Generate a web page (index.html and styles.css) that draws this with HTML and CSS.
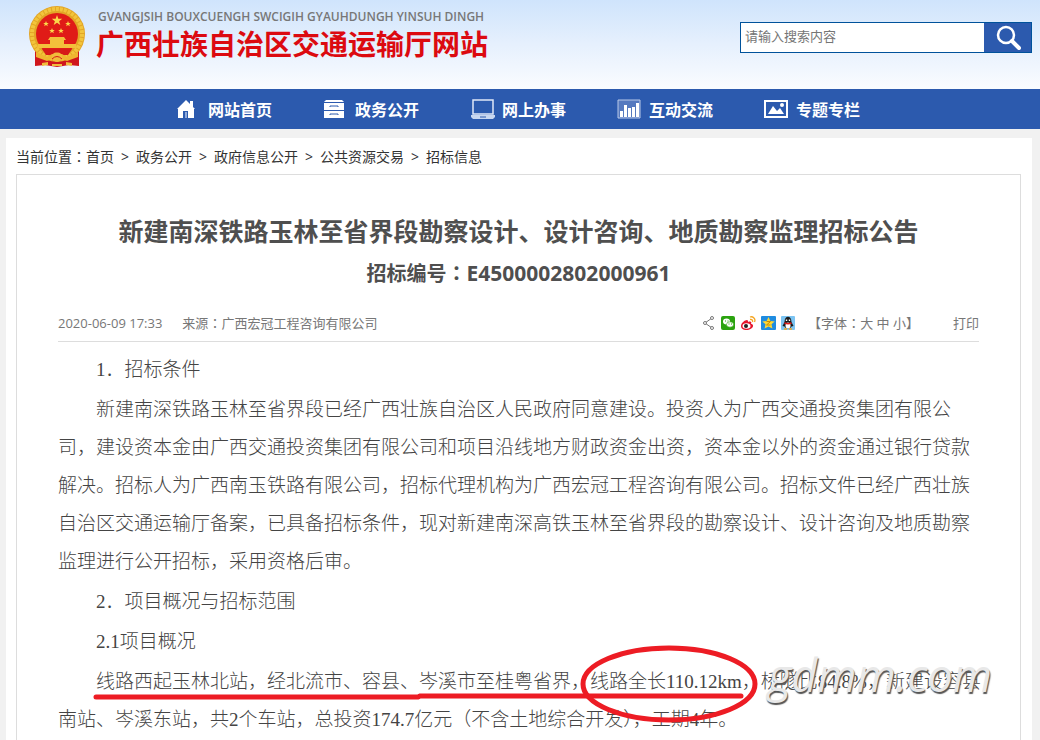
FILE: index.html
```html
<!DOCTYPE html>
<html lang="zh-CN">
<head>
    <meta charset="UTF-8">
    <meta name="viewport" content="width=device-width, initial-scale=1.0">
    <title>新建南深铁路玉林至省界段招标公告 - 广西壮族自治区交通运输厅网站</title>
    <link rel="stylesheet" href="styles.css">
</head>
<body>
    <header class="header">
        <a href="#" class="brand">
            <svg class="emblem" viewBox="0 0 58 62" aria-hidden="true">
                <path d="M7 44 L7 60 L17 59 L29 61 L41 59 L51 60 L51 44 Z" fill="#d0161c"/>
                <circle cx="29" cy="28" r="28" fill="#e3a526"/>
                <circle cx="29" cy="28" r="25" fill="none" stroke="#f2c53c" stroke-width="4" stroke-dasharray="3 1"/>
                <circle cx="29" cy="28" r="21" fill="#e01b17"/>
                <path d="M29 9l1.300 3.700h3.900l-3.100 2.500 1.200 3.800-3.300-2.300-3.300 2.300 1.200-3.800-3.100-2.500h3.900z" fill="#fbd84a"/>
                <path d="M18 15l.8 2h2l-1.600 1.300.6 2-1.800-1.200-1.800 1.200.6-2-1.600-1.300h2zM40 15l.8 2h2l-1.600 1.300.6 2-1.800-1.200-1.800 1.200.6-2-1.600-1.300h2zM24 22l.8 2h2l-1.600 1.300.6 2-1.800-1.200-1.800 1.200.6-2-1.600-1.300h2zM33 22l.8 2h2l-1.600 1.300.6 2-1.800-1.200-1.800 1.200.6-2-1.600-1.300h2z" fill="#fbd84a"/>
                <path d="M22 31h14l2 3h-2v4h12l1 4H9l1-4h12v-4h-2z" fill="#f3bf3b"/>
                <path d="M14 43h30l-4 6H18z" fill="#d61a18"/>
                <path d="M8 46l11 5 5-3h10l5 3 11-5v5l-11 4-5-2-5 3-5-3-5 2-11-4z" fill="#efb630"/>
                <circle cx="29" cy="51" r="5" fill="#f0bd3c"/>
                <path d="M24 53q5-5 10 0M20 46h18" fill="none" stroke="#d61a18"/>
                <path d="M14 57l6-1v3l-6 1zM38 56l6 1v3l-6-1zM24 58h10v2H24z" fill="#f0bd3c"/>
            </svg>
            <span class="brand-text">
                <span class="brand-sub">GVANGJSIH BOUXCUENGH SWCIGIH GYAUHDUNGH YINSUH DINGH</span>
                <span class="brand-name">广西壮族自治区交通运输厅网站</span>
            </span>
        </a>
        <form class="search">
            <input type="text" class="search-input" placeholder="请输入搜索内容" aria-label="请输入搜索内容">
            <button type="button" class="search-btn" aria-label="搜索">
                <svg width="26" height="26" viewBox="0 0 26 26" fill="none" stroke="#fff">
                    <circle cx="11" cy="10" r="8" stroke-width="2.500"/>
                    <path d="M17 16l7 7" stroke-width="4" stroke-linecap="round"/>
                </svg>
            </button>
        </form>
    </header>

    <nav class="nav">
        <a href="#" class="nav-item">
            <svg width="20" height="20" viewBox="0 0 20 20" fill="#fff"><path d="M10 1L1 10h1v9h5v-7h5v7h6v-9h1l-2-2V2h-3v3z"/><path d="M9 13h2v6H9z" fill="#8fa9d8"/></svg>
            <span class="nav-home">网站首页</span>
        </a>
        <a href="#" class="nav-item">
            <svg width="22" height="20" viewBox="0 0 22 20"><path d="M3 1h16l2 2H1zM1 4h20v7H1zM1 12h20v7H1z" fill="#fff"/><path d="M7 8V7h8v1M7 16v-1h8v1" fill="none" stroke="#2c5aae"/></svg>
            <span class="nav-gov">政务公开</span>
        </a>
        <a href="#" class="nav-item">
            <svg width="26" height="20" viewBox="0 0 26 20"><path d="M3 1h20v14H3z" fill="none" stroke="#dfe8f8" stroke-width="1.500"/><path d="M1 16h24v2l-2 2H3l-2-2z" fill="#c9d7f0"/><path d="M10 18h6" stroke="#2c5aae"/></svg>
            <span>网上办事</span>
        </a>
        <a href="#" class="nav-item">
            <svg width="24" height="20" viewBox="0 0 24 20"><path d="M1 1h22v18H1z" fill="#5579bf" stroke="#b9c9e8"/><path d="M3 12h3v6H3zM7 6h3v12H7zM11 9h3v9h-3zM15 8h3v10h-3zM19 4h3v14h-3z" fill="#fff"/></svg>
            <span class="nav-talk">互动交流</span>
        </a>
        <a href="#" class="nav-item">
            <svg width="24" height="20" viewBox="0 0 24 20"><path d="M1 2h22v16H1z" fill="none" stroke="#fff" stroke-width="2"/><path d="M4 15l5-8 4 5 3-3 4 6z" fill="#fff"/><circle cx="18" cy="6" r="2" fill="#fff"/></svg>
            <span class="nav-talk">专题专栏</span>
        </a>
    </nav>

    <main class="page">
        <div class="crumbs">当前位置<span class="colon" lang="zh-TW">：</span><a href="#">首页</a><i>&gt;</i><a href="#">政务公开</a><i>&gt;</i><a href="#">政府信息公开</a><i>&gt;</i><a href="#">公共资源交易</a><i>&gt;</i><a href="#">招标信息</a></div>

        <article class="article">
            <h1 class="title">新建南深铁路玉林至省界段勘察设计、设计咨询、地质勘察监理招标公告</h1>
            <h2 class="subtitle">招标编号<span class="colon" lang="zh-TW">：</span><span class="code">E4500002802000961</span></h2>

            <div class="meta">
                <span class="date">2020-06-09 17:33</span>
                <span class="source">来源<span class="colon" lang="zh-TW">：</span>广西宏冠工程咨询有限公司</span>
                <div class="share">
                    <a href="#" aria-label="分享"><svg width="14" height="16" viewBox="0 0 14 16" fill="#fff" stroke="#777"><path d="M10 3L3 8l7 5" fill="none"/><circle cx="10" cy="3" r="1.500"/><circle cx="3" cy="8" r="1.500"/><circle cx="10" cy="13" r="1.500"/></svg></a>
                    <a href="#" aria-label="微信"><svg width="14" height="14" viewBox="0 0 14 14"><rect width="14" height="14" rx="2" fill="#2ba30f"/><ellipse cx="5.500" cy="5.500" rx="3.500" ry="3" fill="#fff"/><ellipse cx="9" cy="8.500" rx="3.500" ry="2.700" fill="#fff" stroke="#2ba30f" stroke-width=".6"/><path d="M4 5h1M6.500 5h1M7.500 8h1M10 8h1" stroke="#2ba30f"/></svg></a>
                    <a href="#" aria-label="微博"><svg width="16" height="16" viewBox="0 0 16 16"><path d="M1 11c0-3 4-6 6-6 1 0 1 1 1 2 3-1 4 0 3 2 2 0 3 2 1 4-3 3-11 3-11-2z" fill="#e6162d"/><ellipse cx="6.500" cy="11" rx="4" ry="2.800" fill="#fff"/><circle cx="6" cy="11" r="2" fill="#222"/><path d="M10 2c3-1 6 2 4.500 5M10 4.500c2-.5 3 1 2.500 2.500" fill="none" stroke="#f5a623" stroke-width="1.300"/></svg></a>
                    <a href="#" aria-label="QQ空间"><svg width="15" height="14" viewBox="0 0 15 14"><rect width="15" height="14" rx="1" fill="#1f8ce0"/><path d="M7.500 1l1.900 3.900 4.300.5-3.200 2.900.9 4.300-3.900-2.100-3.900 2.100.9-4.300L1.300 5.400l4.300-.5z" fill="#fdd835"/><path d="M5.500 5.500h4l-4 3.500h4" fill="none" stroke="#c98a00"/></svg></a>
                    <a href="#" aria-label="QQ"><svg width="14" height="14" viewBox="0 0 14 14"><rect width="14" height="14" rx="1" fill="#7cc4f2"/><path d="M3.500 6c0-7 7-7 7 0l2 4-2 .5c-1 2.500-6 2.500-7 0l-2-.5z" fill="#1b1b1b"/><ellipse cx="7" cy="9.500" rx="2.500" ry="3" fill="#fff"/><path d="M5.500 3.500v1.500M8.500 3.500v1.500" stroke="#fff" stroke-width="1.400"/><path d="M3.500 7q3.500 1.500 7 0" fill="none" stroke="#e02020" stroke-width="1.600"/><path d="M3 13h3M8 13h3" stroke="#f5a623" stroke-width="1.500"/></svg></a>
                </div>
                <span class="size">【字体<span class="colon" lang="zh-TW">：</span><a href="#">大</a> <a href="#">中</a> <a href="#">小</a>】</span>
                <a href="#" class="print">打印</a>
            </div>

            <div class="content">
                <p>1．招标条件</p>
                <p>新建南深铁路玉林至省界段已经广西壮族自治区人民政府同意建设。投资人为广西交通投资集团有限公司，建设资本金由广西交通投资集团有限公司和项目沿线地方财政资金出资，资本金以外的资金通过银行贷款解决。招标人为广西南玉铁路有限公司，招标代理机构为广西宏冠工程咨询有限公司。招标文件已经广西壮族自治区交通运输厅备案，已具备招标条件，现对新建南深高铁玉林至省界段的勘察设计、设计咨询及地质勘察监理进行公开招标，采用资格后审。</p>
                <p>2．项目概况与招标范围</p>
                <p>2.1项目概况</p>
                <p class="marked">线路西起玉林北站，经北流市、容县、岑溪市至桂粤省界，线路全长110.12km，桥隧比84.8%，新建设容县南站、岑溪东站，共2个车站，总投资174.7亿元（不含土地综合开发），工期4年。
                    <svg class="mark" width="700" height="84" viewBox="0 0 700 84" fill="none" stroke="#ed1c24" aria-hidden="true">
                        <path d="M38 52H360L362 51H683" stroke-width="5" stroke-linecap="round"/>
                        <ellipse cx="611" cy="39" rx="86" ry="36" stroke-width="5"/>
                    </svg>
                    <span class="watermark">gdmm.com</span>
                </p>
            </div>
        </article>
    </main>
</body>
</html>
```
FILE: styles.css
```css
* {
    box-sizing: border-box;
}
body {
    margin: 0;
    background: #f1f1f1;
    color: #333;
    font-family: "Open Sans", "Noto Sans CJK SC", sans-serif;
    font-size: 14px;
}
a {
    color: inherit;
    text-decoration: none;
}
svg {
    display: block;
}
/* centred full-width colon */
.colon {
    font-family: "Noto Sans CJK TC", sans-serif;
}
.header {
    display: flex;
    justify-content: space-between;
    align-items: flex-start;
    height: 89px;
    padding: 6px 8px 0 28px;
    background: linear-gradient(#cfe4fc, #e6f0fd 50%, #fafcff);
}
.brand {
    display: flex;
    gap: 10px;
}
.emblem {
    width: 58px;
    height: 62px;
}
.brand-text {
    display: flex;
    flex-direction: column;
    padding-top: 2px;
}
.brand-sub {
    padding-left: 2px;
    color: #777;
    font-size: 12px;
    font-weight: 600;
    line-height: 18px;
}
.brand-name {
    color: #dc0a10;
    font-family: "Noto Sans CJK SC", sans-serif;
    font-size: 28px;
    font-weight: bold;
    line-height: 34px;
}
.search {
    display: flex;
    width: 292px;
    height: 31px;
    margin-top: 16px;
    border: 1px solid #00529b;
}
.search-input {
    flex: 1;
    min-width: 0;
    padding: 0 4px 4px;
    border: 0;
    background: #fff;
    font-family: "Noto Sans CJK SC", sans-serif;
    font-size: 13px;
}
.search-input::placeholder {
    color: #757575;
}
.search-btn {
    display: flex;
    align-items: center;
    justify-content: center;
    width: 47px;
    padding: 0;
    border: 0;
    background: #2c5aae;
    cursor: pointer;
}
.nav {
    display: flex;
    height: 40px;
    padding-left: 176px;
    background: #2c5aae;
}
.nav-item {
    display: flex;
    align-items: center;
    gap: 6px;
    width: 147px;
    color: #fff;
    font-size: 16px;
    font-weight: bold;
}
.nav-home {
    padding-left: 6px;
}
.nav-gov {
    padding-left: 4px;
}
.nav-talk {
    padding-left: 2px;
}
.page {
    margin: 9px 8px 0 6px;
    padding: 0 11px 0 10px;
    background: #fff;
}
.crumbs {
    height: 36px;
    line-height: 36px;
}
.crumbs i {
    padding: 0 7px;
    font-style: normal;
}
.article {
    padding: 37px 41px 20px;
    border: 1px solid #ddd;
    border-bottom: 0;
}
.title {
    margin: 0;
    color: #4f4f4f;
    font-size: 25px;
    line-height: 38px;
    text-align: center;
}
.subtitle {
    margin: 0;
    color: #4f4f4f;
    font-size: 20px;
    line-height: 46px;
    text-align: center;
}
.code {
    font-size: 21px;
}
.meta {
    display: flex;
    align-items: center;
    height: 45px;
    padding-top: 7px;
    border-bottom: 1px solid #ddd;
    color: #777;
    font-size: 13px;
}
.source {
    margin-left: 20px;
}
.share {
    display: flex;
    align-items: center;
    gap: 5px;
    margin-left: auto;
}
.size {
    margin-left: 13px;
}
.print {
    margin-left: 34px;
}
.content {
    margin-right: -4px;
    padding-top: 9px;
    color: #444;
    font-family: "Liberation Serif", "Noto Sans CJK SC", serif;
    font-size: 19px;
    font-weight: 300;
    line-height: 38px;
}
.content p {
    margin: 0 0 2px;
    text-indent: 2em;
}
.marked {
    position: relative;
}
/* hand-drawn underline and circle over the route length */
.mark {
    position: absolute;
    top: -18px;
    left: 0;
}
.watermark {
    position: absolute;
    top: -7px;
    right: -9px;
    color: #e8e8e8;
    font-family: "Open Sans", sans-serif;
    font-size: 45px;
    font-style: italic;
    font-weight: 400;
    text-indent: 0;
    text-shadow: 1px 2px 1px #555;
}
```
